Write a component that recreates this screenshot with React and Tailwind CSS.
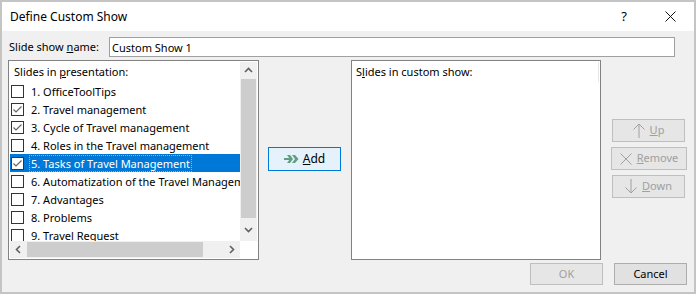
import { useState } from "react";

const slides = [
  { n: 1, title: "OfficeToolTips", checked: false },
  { n: 2, title: "Travel management", checked: true },
  { n: 3, title: "Cycle of Travel management", checked: true },
  { n: 4, title: "Roles in the Travel management", checked: false },
  { n: 5, title: "Tasks of Travel Management", checked: true, selected: true },
  { n: 6, title: "Automatization of the Travel Management", checked: false },
  { n: 7, title: "Advantages", checked: false },
  { n: 8, title: "Problems", checked: false },
  { n: 9, title: "Travel Request", checked: false },
];

function CheckBox({ checked }) {
  return (
    <span className="ml-px flex h-[13px] w-[13px] shrink-0 items-center justify-center border border-[#333333] bg-white">
      {checked && (
        <svg width="11" height="11" viewBox="0 0 11 11">
          <path d="M1.5 5.5 L4 8 L9.5 2.5" fill="none" stroke="#666666" strokeWidth="1.2" />
        </svg>
      )}
    </span>
  );
}

function Chevron({ dir }) {
  const paths = {
    up: "M1 6 L4.5 2.5 L8 6",
    down: "M1 3 L4.5 6.5 L8 3",
    left: "M6 1 L2.5 4.5 L6 8",
    right: "M3 1 L6.5 4.5 L3 8",
  };
  return (
    <svg width="9" height="9" viewBox="0 0 9 9">
      <path d={paths[dir]} fill="none" stroke="#606060" strokeWidth="1.6" />
    </svg>
  );
}

function SideButton({ icon, label, underline, className }) {
  return (
    <button
      disabled
      className={`flex h-[23px] items-center justify-center gap-[5px] border border-[#bfbfbf] bg-[#e6e6e6] text-[#a0a0a0] ${className}`}
    >
      {icon}
      <span>
        <span className="underline">{underline}</span>
        {label}
      </span>
    </button>
  );
}

export default function App() {
  const [name, setName] = useState("Custom Show 1");

  return (
    <div
      className="flex h-[294px] w-[696px] flex-col border-2 border-[#c4c4c4] bg-[#f0f0f0] text-[11px] text-black"
      style={{ fontFamily: '"Segoe UI", "Noto Sans", sans-serif' }}
    >
      {/* title bar */}
      <div className="flex h-[29px] shrink-0 items-center bg-white pl-[8px] text-[12px]">
        <span className="flex-1">Define Custom Show</span>
        <span className="mr-[38px] text-[13px]">?</span>
        <svg className="mr-[18px]" width="11" height="11" viewBox="0 0 11 11">
          <path d="M0.5 0.5 L10.5 10.5 M10.5 0.5 L0.5 10.5" stroke="#111111" strokeWidth="1" />
        </svg>
      </div>

      <div className="flex flex-1 flex-col px-[6px] pt-[6px]">
        {/* name row */}
        <div className="flex items-center">
          <label className="block w-[101px] shrink-0 pl-px">
            Slide show <span className="underline">n</span>ame:
          </label>
          <input
            value={name}
            onChange={(e) => setName(e.target.value)}
            className="h-[20px] w-[566px] border border-[#a0a0a0] bg-white px-[2px] text-[11px] outline-none"
          />
        </div>

        <div className="mt-[3px] flex">
          {/* left list */}
          <div className="flex h-[200px] w-[251px] flex-col border border-[#828282] bg-white p-px">
            <div className="flex min-h-0 flex-1">
              <div className="flex-1 overflow-hidden">
                <div className="flex h-[20px] items-center pl-[4px]">
                  <span>
                    Slides in <span className="underline">p</span>resentation:
                  </span>
                </div>
                {slides.map((s) => (
                  <div
                    key={s.n}
                    className={`flex h-[18px] items-center gap-[5px] whitespace-nowrap ${
                      s.selected ? "bg-[#0078d7] text-white" : ""
                    }`}
                  >
                    <CheckBox checked={s.checked} />
                    <span
                      className={`px-px leading-[15px] ${
                        s.selected ? "border border-dotted border-[#ff9a3c]" : "border border-transparent"
                      }`}
                    >
                      {s.n}. {s.title}
                    </span>
                  </div>
                ))}
              </div>
              {/* vertical scrollbar */}
              <div className="flex w-[17px] shrink-0 flex-col bg-[#f0f0f0]">
                <div className="flex h-[17px] items-center justify-center">
                  <Chevron dir="up" />
                </div>
                <div className="mx-px h-[139px] bg-[#cdcdcd]" />
                <div className="flex flex-1 items-center justify-center">
                  <Chevron dir="down" />
                </div>
              </div>
            </div>
            {/* horizontal scrollbar */}
            <div className="flex h-[17px] shrink-0">
              <div className="flex flex-1 bg-[#f0f0f0]">
                <div className="flex w-[17px] items-center justify-center">
                  <Chevron dir="left" />
                </div>
                <div className="my-px w-[176px] bg-[#cdcdcd]" />
                <div className="flex flex-1 items-center justify-end pr-[4px]">
                  <Chevron dir="right" />
                </div>
              </div>
              <div className="w-[17px] bg-white" />
            </div>
          </div>

          {/* add button */}
          <div className="flex w-[92px] items-start pt-[87px] pl-[9px]">
            <button className="flex h-[24px] w-[73px] items-center justify-center gap-[4px] border border-[#0078d7] bg-[#e5f1fb] text-[12px]">
              <svg width="15" height="8" viewBox="0 0 15 8">
                <path d="M0 3 H6 V5 H0 Z" fill="#5f9f80" />
                <path d="M3 0 H6 L9 4 L6 8 H3 L6 4 Z" fill="#5f9f80" />
                <path d="M8 0 H11 L14.5 4 L11 8 H8 L11 4 Z" fill="#5f9f80" />
              </svg>
              <span>
                <span className="underline">A</span>dd
              </span>
            </button>
          </div>

          {/* right list */}
          <div className="flex h-[200px] w-[250px] border border-[#828282] bg-white">
            <div className="flex-1 pl-[4px] pt-px">
              <div className="flex h-[20px] items-center">
                <span>
                  S<span className="underline">l</span>ides in custom show:
                </span>
              </div>
            </div>
            <div className="mr-px mt-px h-[20px] w-px bg-[#e6e6e6]" />
          </div>

          {/* side buttons */}
          <div className="flex flex-col items-start pl-[10px] pt-[59px]">
            <SideButton
              className="ml-px w-[73px]"
              underline="U"
              label="p"
              icon={
                <svg width="12" height="15" viewBox="0 0 12 15">
                  <path d="M6 1 V15 M0.5 6.5 L6 1 L11.5 6.5" fill="none" stroke="#a0a0a0" strokeWidth="1" />
                </svg>
              }
            />
            <SideButton
              className="mt-[5px] w-[76px]"
              underline="R"
              label="emove"
              icon={
                <svg width="12" height="12" viewBox="0 0 12 12">
                  <path d="M0.5 0.5 L11.5 11.5 M11.5 0.5 L0.5 11.5" stroke="#a0a0a0" strokeWidth="1" />
                </svg>
              }
            />
            <SideButton
              className="ml-px mt-[5px] w-[73px]"
              underline="D"
              label="own"
              icon={
                <svg width="12" height="15" viewBox="0 0 12 15">
                  <path d="M6 0 V14 M0.5 8.5 L6 14 L11.5 8.5" fill="none" stroke="#a0a0a0" strokeWidth="1" />
                </svg>
              }
            />
          </div>
        </div>

        {/* bottom buttons */}
        <div className="mt-[3px] flex justify-end gap-[11px] pr-[1px]">
          <button disabled className="h-[22px] w-[73px] border border-[#bfbfbf] bg-[#e6e6e6] text-[#a0a0a0]">
            OK
          </button>
          <button className="h-[22px] w-[73px] border border-[#adadad] bg-[#e1e1e1]">Cancel</button>
        </div>
      </div>
    </div>
  );
}
